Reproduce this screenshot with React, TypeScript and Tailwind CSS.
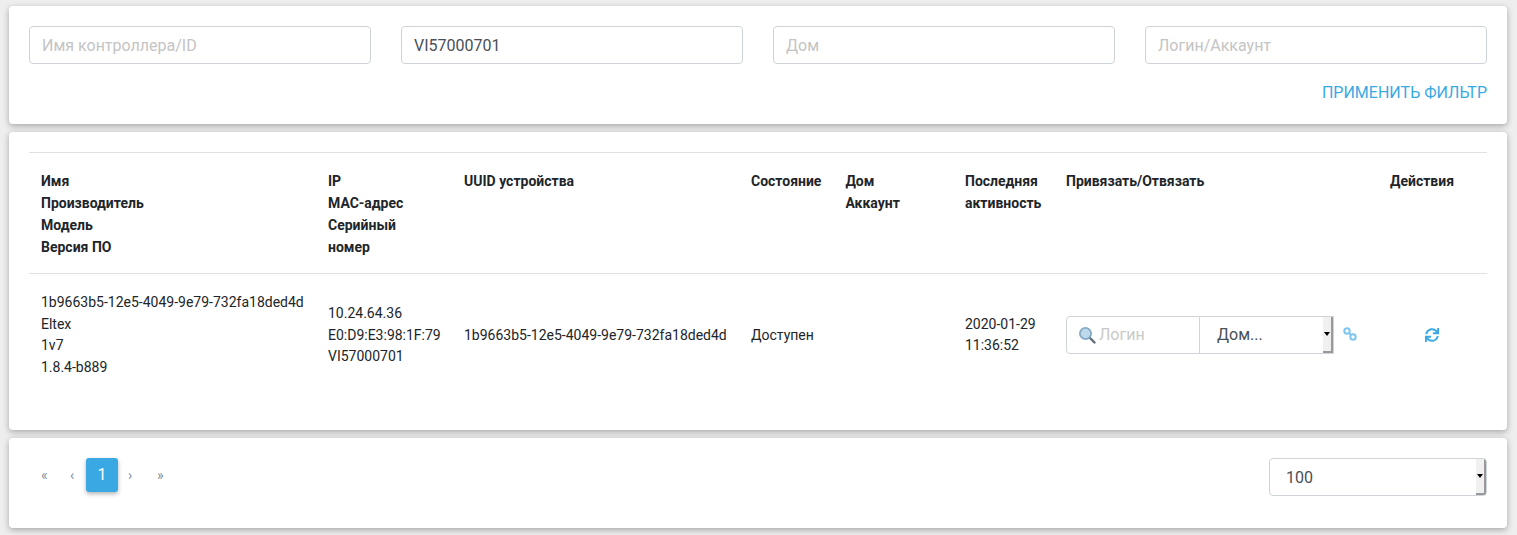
import { FaSync } from 'react-icons/fa';

function FilterInput({ placeholder, value }: { placeholder: string; value?: string }) {
  return (
    <input
      readOnly
      placeholder={placeholder}
      value={value || ''}
      className="w-[342px] h-[38px] px-3 border border-[#ced4da] rounded text-[16px] text-[#495057] placeholder:text-[#c4c4c4] bg-white outline-none"
    />
  );
}

function Card({ className, children }: { className: string; children: React.ReactNode }) {
  return <section className={`bg-white rounded ml-[9px] mr-[10px] shadow-[0_2px_6px_rgba(0,0,0,0.3)] ${className}`}>{children}</section>;
}

function SelectArrow() {
  return (
    <div className="w-[10px] self-stretch bg-[#f0f0f0] border-r-2 border-b-2 border-[#999] flex items-center justify-center">
      <div className="w-0 h-0 border-x-[3px] border-x-transparent border-t-[4px] border-t-black" />
    </div>
  );
}

function ChainIcon() {
  return (
    <svg width="14" height="14" viewBox="0 0 14 14" fill="none" stroke="#7fc6ef" strokeWidth="2" className="ml-[9px] -mt-[2px]">
      <circle cx="4" cy="4" r="2.7" />
      <circle cx="10" cy="10" r="2.7" />
      <path d="M5.5 5.5l3 3" />
    </svg>
  );
}

function SearchIcon() {
  return (
    <svg width="18" height="18" viewBox="0 0 18 18" fill="none" className="mr-[3px] -ml-[1px]">
      <path d="M11 11l5.5 5.5" stroke="#5f6b75" strokeWidth="2.4" strokeLinecap="round" />
      <circle cx="7.5" cy="7.5" r="5.6" fill="#bcd9ee" stroke="#86abc4" strokeWidth="1.8" />
    </svg>
  );
}

export default function App() {
  return (
    <div className="h-[535px] bg-[#eeeeee] pt-[6px] font-['Roboto',sans-serif] text-[14px] text-[#212529] overflow-hidden">
      <Card className="h-[118px] px-5 pt-5">
        <div className="flex justify-between">
          <FilterInput placeholder="Имя контроллера/ID" />
          <FilterInput placeholder="" value="VI57000701" />
          <FilterInput placeholder="Дом" />
          <FilterInput placeholder="Логин/Аккаунт" />
        </div>
        <div className="text-right text-[#3aa9e3] text-[16px] leading-[19px] mt-[19px]">ПРИМЕНИТЬ ФИЛЬТР</div>
      </Card>

      <Card className="h-[298px] mt-[8px] px-5 pt-5">
        <div className="border-t border-[#dee2e6]">
          <div className="flex font-bold leading-[22px] h-[121px] pt-[17px] border-b border-[#dee2e6] text-[#212529]">
            <div className="w-[287px] pl-3">Имя<br />Производитель<br />Модель<br />Версия ПО</div>
            <div className="w-[136px] pl-3">IP<br />MAC-адрес<br />Серийный<br />номер</div>
            <div className="w-[287px] pl-3">UUID устройства</div>
            <div className="w-[94.4px] pl-3">Состояние</div>
            <div className="w-[119.6px] pl-3">Дом<br />Аккаунт</div>
            <div className="w-[101px] pl-3">Последняя<br />активность</div>
            <div className="w-[324px] pl-3">Привязать/Отвязать</div>
            <div className="pl-3">Действия</div>
          </div>
          <div className="flex items-center leading-[21.67px] h-[122px]">
            <div className="w-[287px] pl-3 pt-[0.6px]">1b9663b5-12e5-4049-9e79-732fa18ded4d<br />Eltex<br />1v7<br />1.8.4-b889</div>
            <div className="w-[136px] pl-3 pt-[0.8px]">10.24.64.36<br />E0:D9:E3:98:1F:79<br />VI57000701</div>
            <div className="w-[287px] pl-3 pt-[1px]">1b9663b5-12e5-4049-9e79-732fa18ded4d</div>
            <div className="w-[94.4px] pl-3 pt-[1px]">Доступен</div>
            <div className="w-[119.6px] pl-3" />
            <div className="w-[101px] pl-3 pt-[0.8px]">2020-01-29<br />11:36:52</div>
            <div className="w-[324px] pl-3 flex items-center">
              <div className="w-[268px] h-[38px] flex border border-[#ced4da] rounded-l overflow-hidden text-[16px]">
                <div className="w-[133px] flex items-center pl-3 border-r border-[#ced4da] text-[#c9c9c9]">
                  <SearchIcon />Логин
                </div>
                <div className="flex-1 flex items-center pl-[17px] text-[#495057]">Дом...</div>
                <SelectArrow />
              </div>
              <ChainIcon />
            </div>
            <div className="flex-1 pl-[47px]">
              <FaSync className="w-[14px] h-[14px] text-[#3aa9e3]" />
            </div>
          </div>
        </div>
      </Card>

      <Card className="h-[90px] mt-[8px] px-5 pt-5 flex justify-between items-start">
        <div className="flex items-center text-[#7f8fa0] text-[14px] pl-[12px] h-[34px]">
          <span className="w-[29px]">«</span>
          <span className="w-[16px]">‹</span>
          <span className="w-[32px] h-[34px] flex items-center justify-center bg-[#3aa9e3] text-white text-[16px] rounded-[3px] shadow-[0_2px_4px_rgba(0,0,0,0.3)]">1</span>
          <span className="w-[38px] pl-[10px]">›</span>
          <span className="pl-[1px]">»</span>
        </div>
        <div className="w-[218px] h-[38px] flex items-center border border-[#ced4da] rounded pl-4 text-[16px] text-[#495057] overflow-hidden">
          <span className="flex-1 pt-[1px]">100</span>
          <SelectArrow />
        </div>
      </Card>
    </div>
  );
}
